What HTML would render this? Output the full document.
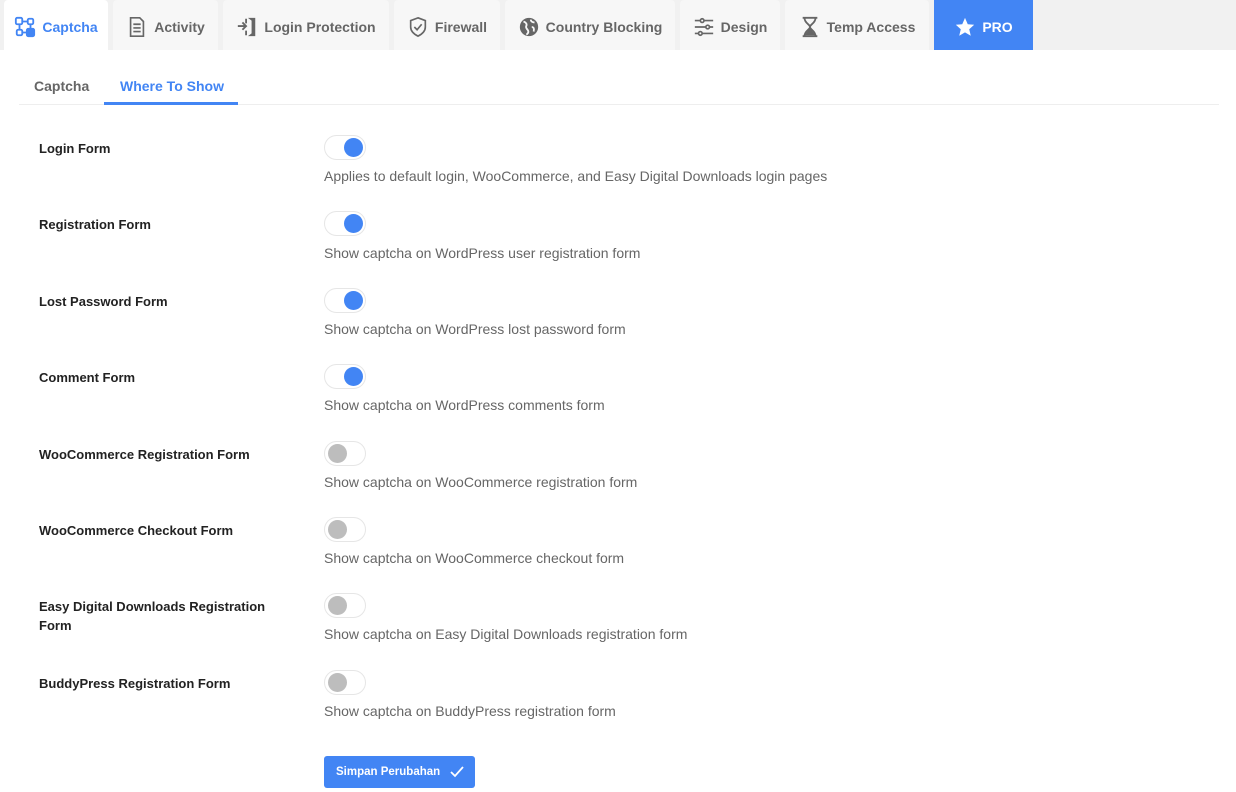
<!DOCTYPE html>
<html><head><style>
*{box-sizing:border-box;margin:0;padding:0}
body{width:1236px;height:792px;background:#fff;font-family:"Liberation Sans",Arial,sans-serif;position:relative;overflow:hidden}
.bar{position:absolute;left:0;top:0;width:1236px;height:50px;background:#f1f1f1}
.tab{position:absolute;top:0;height:50px;padding-top:3px;background:#f7f7f7;border-radius:4px 4px 0 0;color:#666;font-weight:bold;font-size:14px;display:flex;align-items:center;justify-content:center;gap:6px}
.tab svg{width:22px;height:22px}
.sub{position:absolute;top:78px;font-size:14px;font-weight:bold;color:#666}
.lbl{position:absolute;left:39px;font-size:13px;font-weight:bold;color:#222;line-height:19px;width:240px}
.tg{position:absolute;left:324px;width:42px;height:25px;border:1px solid #e6e6e6;border-radius:13px;background:#fff}
.tg i{position:absolute;top:2px;width:19px;height:19px;border-radius:50%}
.on i{left:19px;background:#4285f4}.off i{left:3px;background:#bdbdbd}
.d{position:absolute;left:324px;font-size:14px;color:#666}
</style></head><body>
<div class="bar"></div>
<div class="tab" style="left:4px;width:104px;background:#fff;color:#4285f4"><svg viewBox="0 0 24 24" fill="none" stroke="#4285f4" stroke-width="2"><rect x="2" y="2" width="7" height="7" rx="1.5"/><rect x="15" y="3" width="6" height="6" rx="1.5"/><rect x="3" y="15" width="6" height="6" rx="1.5"/><rect x="14" y="14" width="8" height="8" rx="1.5" fill="#4285f4"/><path d="M9 6h6M6 9v6M18 9v5M9 18h5"/></svg>Captcha</div>
<div class="tab" style="left:113px;width:105px"><svg viewBox="0 0 24 24" fill="none" stroke="#666" stroke-width="1.8"><path d="M5 2h10l4 4v16H5z"/><path d="M8 9h8M8 13h8M8 17h8"/></svg>Activity</div>
<div class="tab" style="left:223px;width:166px"><svg viewBox="0 0 24 24" fill="#666"><path d="M13 2h8v20h-8l4-3V5z"/><path d="M2 11h8M7 7l4 4-4 4" stroke="#666" stroke-width="2" fill="none"/><path d="M11 3v5M11 16v5" stroke="#666" stroke-width="2"/></svg>Login Protection</div>
<div class="tab" style="left:394px;width:106px"><svg viewBox="0 0 24 24" fill="none" stroke="#666" stroke-width="1.8"><path d="M12 2l8 3v7c0 5-4 8-8 10-4-2-8-5-8-10V5z"/><path d="M8 12l3 3 5-6"/></svg>Firewall</div>
<div class="tab" style="left:505px;width:170px"><svg viewBox="0 0 24 24"><circle cx="12" cy="12" r="10" fill="#666"/><path d="M6 6c3 1 4 3 3 5s1 3 2 5-1 4-2 4M14 4c0 2 2 3 4 3M15 12c2 0 3 2 2 5" stroke="#f7f7f7" stroke-width="2" fill="none"/></svg>Country Blocking</div>
<div class="tab" style="left:680px;width:100px"><svg viewBox="0 0 24 24" fill="none" stroke="#666" stroke-width="1.8"><path d="M2 5h6M12 5h10M2 12h12M18 12h4M2 19h4M10 19h12"/><circle cx="10" cy="5" r="2"/><circle cx="16" cy="12" r="2"/><circle cx="8" cy="19" r="2"/></svg>Design</div>
<div class="tab" style="left:785px;width:144px"><svg viewBox="0 0 24 24" fill="none" stroke="#666" stroke-width="2"><path d="M4 2h16M4 22h16M6 2c0 6 6 7 6 10s-6 4-6 10M18 2c0 6-6 7-6 10s6 4 6 10"/><path d="M8 20l4-5 4 5z" fill="#666"/></svg>Temp Access</div>
<div class="tab" style="left:934px;width:99px;background:#4285f4;color:#fff;border-radius:0"><svg viewBox="0 0 24 24" fill="#fff"><path d="M12 2l3 7 7 .6-5.4 4.8 1.7 7.2L12 17.8 5.7 21.6l1.7-7.2L2 9.6 9 9z"/></svg>PRO</div>
<div style="position:absolute;left:19px;top:104px;width:1200px;height:1px;background:#eee"></div>
<div class="sub" style="left:34px">Captcha</div>
<div class="sub" style="left:120px;color:#4285f4">Where To Show</div>
<div style="position:absolute;left:104px;top:102px;width:134px;height:3px;background:#4285f4"></div>

<div class="lbl" style="top:139px">Login Form</div><div class="tg on" style="top:135px"><i></i></div><div class="d" style="top:168px">Applies to default login, WooCommerce, and Easy Digital Downloads login pages</div>
<div class="lbl" style="top:215px">Registration Form</div><div class="tg on" style="top:211px"><i></i></div><div class="d" style="top:245px">Show captcha on WordPress user registration form</div>
<div class="lbl" style="top:292px">Lost Password Form</div><div class="tg on" style="top:288px"><i></i></div><div class="d" style="top:321px">Show captcha on WordPress lost password form</div>
<div class="lbl" style="top:368px">Comment Form</div><div class="tg on" style="top:364px"><i></i></div><div class="d" style="top:397px">Show captcha on WordPress comments form</div>
<div class="lbl" style="top:445px">WooCommerce Registration Form</div><div class="tg off" style="top:441px"><i></i></div><div class="d" style="top:474px">Show captcha on WooCommerce registration form</div>
<div class="lbl" style="top:521px">WooCommerce Checkout Form</div><div class="tg off" style="top:517px"><i></i></div><div class="d" style="top:550px">Show captcha on WooCommerce checkout form</div>
<div class="lbl" style="top:597px">Easy Digital Downloads Registration Form</div><div class="tg off" style="top:593px"><i></i></div><div class="d" style="top:626px">Show captcha on Easy Digital Downloads registration form</div>
<div class="lbl" style="top:674px">BuddyPress Registration Form</div><div class="tg off" style="top:670px"><i></i></div><div class="d" style="top:703px">Show captcha on BuddyPress registration form</div>

<div style="position:absolute;left:324px;top:756px;width:151px;height:32px;background:#4285f4;border-radius:3px;color:#fff;font-size:11.5px;font-weight:bold;display:flex;align-items:center;padding-left:12px;gap:9px">Simpan Perubahan<svg width="16" height="14" viewBox="0 0 16 14" fill="none" stroke="#fff" stroke-width="1.8"><path d="M2 7l4 4 8-9"/></svg></div>
</body></html>
